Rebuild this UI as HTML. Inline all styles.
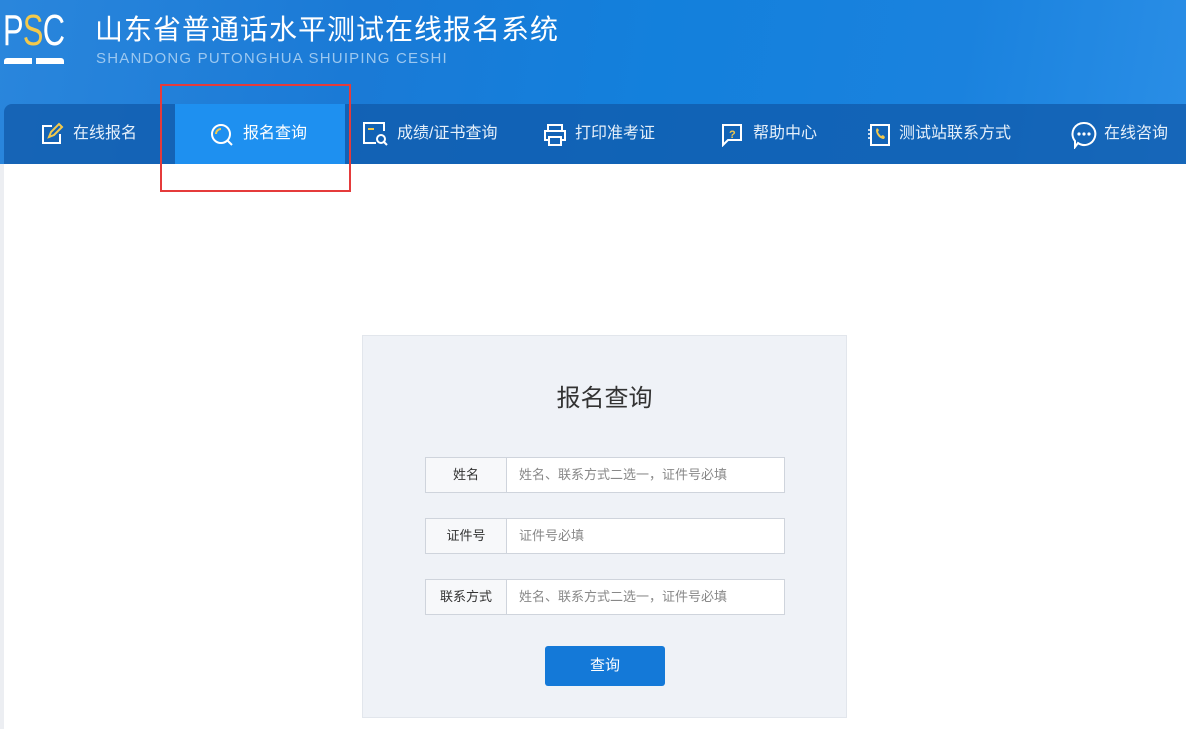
<!DOCTYPE html>
<html><head><meta charset="utf-8"><style>
body{margin:0;width:1186px;height:729px;overflow:hidden;background:#fff;font-family:"Liberation Sans","Noto Sans CJK SC",sans-serif;position:relative}
.hdr{position:absolute;left:0;top:0;width:1186px;height:164px;background:linear-gradient(100deg,#2a86dc 0%,#1a7ad6 30%,#1380dc 55%,#1a82de 80%,#2a8ee6 100%)}
.logo{position:absolute;left:3px;top:9px;font-size:44px;color:#fff;line-height:44px;transform:scaleX(0.7);transform-origin:0 0;letter-spacing:-1px}
.logo b{font-weight:normal;color:#f3c94c}
.lb1{position:absolute;left:4px;top:58px;width:28px;height:6px;background:#fff;border-radius:3px 0 0 0}
.lb2{position:absolute;left:36px;top:58px;width:28px;height:6px;background:#fff;border-radius:0 3px 0 0}
.t1{position:absolute;left:95px;top:10px;font-size:28px;line-height:40px;color:#fff;letter-spacing:1px}
.t2{position:absolute;left:96px;top:50px;font-size:15px;line-height:18px;color:#9cc8f0;letter-spacing:1.2px}
.nav{position:absolute;left:4px;top:104px;width:1182px;height:60px;background:rgba(16,90,170,.75);border-radius:8px 0 0 0}
.it{position:absolute;top:0;height:60px;line-height:60px;font-size:16px;color:#e6f0fa}
.act{position:absolute;left:175px;top:104px;width:170px;height:60px;background:#1e90f0}
.red{position:absolute;left:160px;top:84px;width:191px;height:108px;border:2px solid #e53b3b;box-sizing:border-box}
.side{position:absolute;left:0;top:164px;width:4px;height:565px;background:#eceef2}
.card{position:absolute;left:362px;top:335px;width:483px;height:381px;background:#eff2f7;border:1px solid #e2e6ec}
.h{position:absolute;left:0;width:483px;top:42px;text-align:center;font-size:24px;color:#333}
.row{position:absolute;left:62px;width:358px;height:34px;border:1px solid #cfd4dc;background:#fff}
.row .l{position:absolute;left:0;top:0;width:80px;height:34px;line-height:34px;text-align:center;font-size:13px;color:#333;background:#f7f8fa;border-right:1px solid #cfd4dc}
.row .p{position:absolute;left:93px;top:0;line-height:34px;font-size:13px;color:#888}
.btn{position:absolute;left:182px;top:310px;width:120px;height:40px;background:#1479d8;border-radius:3px;color:#fff;text-align:center;line-height:40px;font-size:15px}
svg{position:absolute}
</style></head><body>
<div class="hdr"></div>
<div class="logo">P<b>S</b>C</div>
<div class="lb1"></div><div class="lb2"></div>
<div class="t1">山东省普通话水平测试在线报名系统</div>
<div class="t2">SHANDONG PUTONGHUA SHUIPING CESHI</div>
<div class="nav"></div>
<div class="act"></div>
<svg style="left:40px;top:122px" width="24" height="24" viewBox="0 0 24 24"><path d="M12 4H3v17h17v-9" fill="none" stroke="#fff" stroke-width="2"/><path d="M9 15l2-5 8-8 3 3-8 8z" fill="none" stroke="#f3c94c" stroke-width="2"/></svg>
<div class="it" style="left:73px;top:104px">在线报名</div>
<svg style="left:210px;top:123px" width="24" height="24" viewBox="0 0 24 24"><circle cx="11" cy="11" r="9" fill="none" stroke="#fff" stroke-width="2"/><path d="M6 11a5 5 0 0 1 5-5" fill="none" stroke="#f3c94c" stroke-width="2"/><path d="M17 17l5 5" stroke="#fff" stroke-width="2"/></svg>
<div class="it" style="left:243px;top:104px;color:#fff">报名查询</div>
<svg style="left:362px;top:121px" width="28" height="26" viewBox="0 0 28 26"><path d="M14 22H2V2h20v8" fill="none" stroke="#fff" stroke-width="2"/><path d="M6 8h6" stroke="#f3c94c" stroke-width="2"/><circle cx="19" cy="18" r="4" fill="none" stroke="#fff" stroke-width="2"/><path d="M22 21l3 3" stroke="#fff" stroke-width="2"/></svg>
<div class="it" style="left:397px;top:104px">成绩/证书查询</div>
<svg style="left:543px;top:123px" width="24" height="24" viewBox="0 0 24 24"><rect x="5" y="2" width="14" height="6" fill="none" stroke="#fff" stroke-width="2"/><rect x="2" y="8" width="20" height="9" fill="none" stroke="#fff" stroke-width="2"/><rect x="6" y="14" width="12" height="8" fill="#1565b8" stroke="#fff" stroke-width="2"/></svg>
<div class="it" style="left:575px;top:104px">打印准考证</div>
<svg style="left:721px;top:123px" width="24" height="24" viewBox="0 0 24 24"><path d="M2 2h18v15H7l-5 5z" fill="none" stroke="#fff" stroke-width="2"/><text x="8" y="15" font-size="11" fill="#f3c94c" font-weight="bold" font-family="Liberation Sans">?</text></svg>
<div class="it" style="left:753px;top:104px">帮助中心</div>
<svg style="left:866px;top:123px" width="26" height="24" viewBox="0 0 26 24"><rect x="5" y="2" width="18" height="20" fill="none" stroke="#fff" stroke-width="2"/><path d="M2 7h4M2 11h4M2 15h4" stroke="#fff" stroke-width="1.5"/><path d="M10 7c0 5 4 9 8 9l1-2-2-2-2 1c-1-1-2-2-3-4l1-2-2-2z" fill="#f3c94c"/></svg>
<div class="it" style="left:899px;top:104px">测试站联系方式</div>
<svg style="left:1070px;top:121px" width="28" height="28" viewBox="0 0 28 28"><path d="M14 2a11 11 0 1 1-6 20l-3 4 0-6A11 11 0 0 1 14 2z" fill="none" stroke="#fff" stroke-width="2"/><circle cx="9" cy="13" r="1.6" fill="#fff"/><circle cx="14" cy="13" r="1.6" fill="#fff"/><circle cx="19" cy="13" r="1.6" fill="#fff"/></svg>
<div class="it" style="left:1104px;top:104px">在线咨询</div>
<div class="red"></div>
<div class="side"></div>
<div class="card">
<div class="h">报名查询</div>
<div class="row" style="top:121px"><div class="l">姓名</div><div class="p">姓名、联系方式二选一，证件号必填</div></div>
<div class="row" style="top:182px"><div class="l">证件号</div><div class="p">证件号必填</div></div>
<div class="row" style="top:243px"><div class="l">联系方式</div><div class="p">姓名、联系方式二选一，证件号必填</div></div>
<div class="btn">查询</div>
</div>
</body></html>
